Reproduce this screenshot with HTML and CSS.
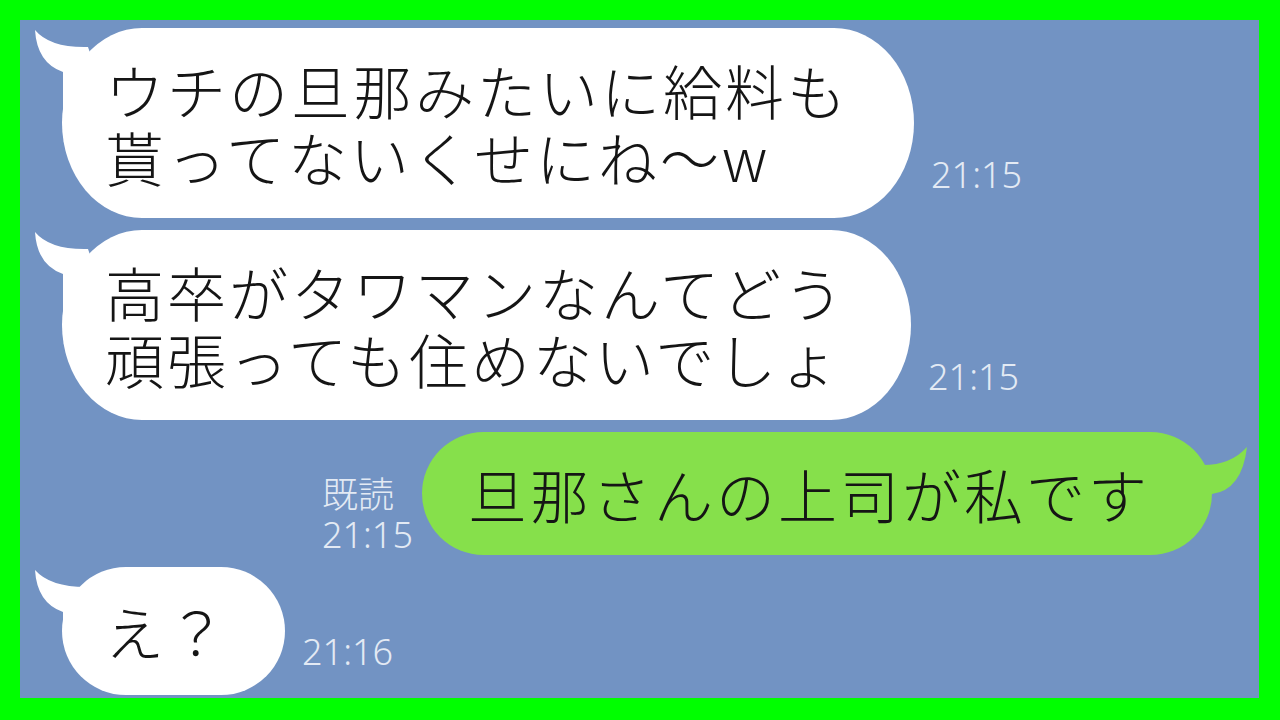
FILE: index.html
```html
<!DOCTYPE html>
<html lang="ja">
<head>
<meta charset="utf-8">
<link rel="stylesheet" href="styles.css">
</head>
<body>
<div class="frame">
  <div class="chat">
    <div class="row left">
      <div class="bubble white big">
        <svg class="tail tail-left" viewBox="0 0 60 110" width="60" height="110"><path d="M3,2 Q18,20 56,19 L70,60 L31,110 L31,44 Q5,35 3,2 Z"/></svg>
        <span class="msg">ウチの旦那みたいに給料も<br>貰ってないくせにね〜w</span>
      </div>
      <div class="time">21:15</div>
    </div>
    <div class="row left">
      <div class="bubble white big">
        <svg class="tail tail-left" viewBox="0 0 60 110" width="60" height="110"><path d="M3,2 Q18,20 56,19 L70,60 L31,110 L31,44 Q5,35 3,2 Z"/></svg>
        <span class="msg">高卒がタワマンなんてどう<br>頑張っても住めないでしょ</span>
      </div>
      <div class="time">21:15</div>
    </div>
    <div class="row right">
      <div class="read"><span class="read-line">既読</span><span class="read-line">21:15</span></div>
      <div class="bubble green">
        <svg class="tail tail-right" viewBox="0 0 60 80" width="60" height="80"><path d="M55,15 Q38,34 8,33 L0,40 L0,62 L20,62 Q50,58 55,15 Z"/></svg>
        <span class="msg">旦那さんの上司が私です</span>
      </div>
    </div>
    <div class="row left">
      <div class="bubble white small">
        <svg class="tail tail-left" viewBox="0 0 60 110" width="60" height="110"><path d="M3,3 Q18,20 54,20 L70,64 L31,64 L31,45 Q5,36 3,3 Z"/></svg>
        <span class="msg">え？</span>
      </div>
      <div class="time">21:16</div>
    </div>
  </div>
</div>
</body>
</html>
```

FILE: styles.css
```css
* { box-sizing: border-box; }
html, body { margin: 0; padding: 0; }
body {
  width: 1280px;
  height: 720px;
  overflow: hidden;
  font-family: "Noto Sans CJK JP", "Noto Sans", sans-serif;
}
.frame {
  width: 1280px;
  height: 720px;
  background: #00ff00;
  padding: 20px 21px 22px 20px;
}
.chat {
  width: 100%;
  height: 100%;
  background: #7293c3;
  display: flex;
  flex-direction: column;
  gap: 12px;
  padding: 8px 47px 0 42px;
}
.row {
  display: flex;
  align-items: flex-end;
}
.row.right {
  justify-content: flex-end;
  gap: 9px;
}
.bubble {
  position: relative;
  white-space: nowrap;
  color: #151515;
  font-family: "Noto Sans CJK JP", sans-serif;
  font-weight: 300;
  font-size: 59px;
  line-height: 67px;
  letter-spacing: 3px;
}
.msg { position: relative; }
.bubble.white { background: #ffffff; }
.bubble.big {
  padding: 28px 65px 28px 43px;
  border-radius: 80px / 95px;
}
.bubble.small {
  padding: 30px 56px 31px 43px;
  border-radius: 64px;
}
.bubble.green {
  background: #86e04b;
  padding: 28px 62px 28px 46px;
  border-radius: 62px;
}
.tail {
  position: absolute;
  top: 0;
  display: block;
}
.tail-left { left: -30px; fill: #ffffff; }
.tail-right { right: -40px; fill: #86e04b; }
.time, .read {
  color: #e3eaf4;
  font-family: "Noto Sans", "Noto Sans CJK JP", sans-serif;
  font-weight: 300;
  font-size: 36px;
}
.time {
  line-height: 36px;
  margin-left: 17px;
  margin-bottom: 25px;
}
.read {
  display: flex;
  flex-direction: column;
}
.read-line {
  display: block;
  height: 40px;
  line-height: 40px;
}
```
